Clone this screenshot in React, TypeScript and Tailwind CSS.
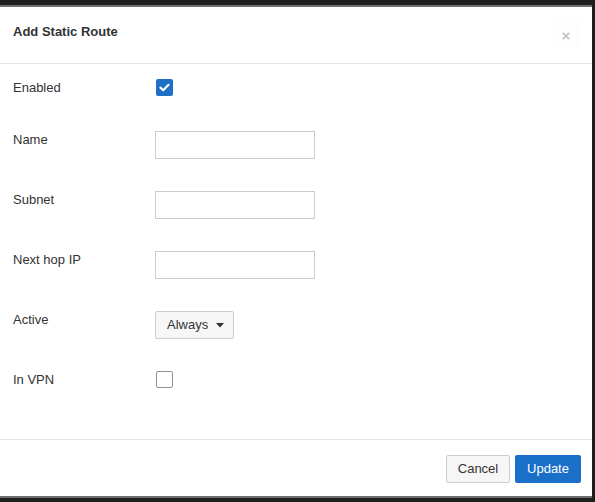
import React from "react";

function CheckBox({ checked }: { checked: boolean }) {
  if (checked) {
    return (
      <div className="mt-[1px] flex h-[17px] w-[17px] items-center justify-center rounded-[2px] bg-[#1f6fc6]">
        <svg width="11" height="9" viewBox="0 0 11 9" fill="none">
          <path d="M1.5 4.6 L4.2 7.2 L9.5 1.8" stroke="#fff" strokeWidth="2.2" strokeLinecap="round" strokeLinejoin="round" />
        </svg>
      </div>
    );
  }
  return <div className="mt-[1px] h-[17px] w-[17px] rounded-[2px] border border-[#8f8f8f] bg-white" />;
}

function TextInput() {
  return <div className="mt-[1px] h-[28px] w-[160px] border border-[#cccccc] bg-white" />;
}

function Row({ label, children, first }: { label: string; children: React.ReactNode; first?: boolean }) {
  return (
    <div className={`flex items-start ${first ? "h-[21px]" : "h-[29px]"}`}>
      <div className="w-[142px] pt-[1px] text-[13px] leading-[18px] text-[#333333]">{label}</div>
      {children}
    </div>
  );
}

export default function App() {
  return (
    <div
      className="h-[502px] w-[595px] overflow-hidden bg-[#1e1e1e] pt-[5px]"
      style={{ fontFamily: '"Liberation Sans", Arial, sans-serif' }}
    >
      <div className="flex h-[493px] w-[592px] flex-col border-y-2 border-[#6f6f6f] bg-white">
        {/* header */}
        <div className="flex h-[57px] items-start justify-between border-b border-[#e5e5e5] pl-[13px] pr-[11px]">
          <div className="pt-[15px] text-[13px] font-bold leading-[20px] text-[#333333]">Add Static Route</div>
          <div className="mt-[15px] flex h-[26px] w-[30px] items-center justify-center bg-[#fdfdfd] text-[15px] font-bold leading-none text-[#c4c4c4]">
            ×
          </div>
        </div>
        {/* body */}
        <div className="flex h-[375px] flex-col gap-[31px] px-[13px] pt-[14px]">
          <Row label="Enabled" first>
            <div className="pl-[1px]">
              <CheckBox checked />
            </div>
          </Row>
          <Row label="Name">
            <TextInput />
          </Row>
          <Row label="Subnet">
            <TextInput />
          </Row>
          <Row label="Next hop IP">
            <TextInput />
          </Row>
          <Row label="Active">
            <div className="mt-[1px] flex h-[28px] w-[79px] items-center rounded-[2px] border border-[#cccccc] bg-[#f7f7f7] pl-[11px] text-[13px] text-[#333333]">
              <span>Always</span>
              <svg className="ml-[8px]" width="8" height="5" viewBox="0 0 8 5">
                <path d="M0 0 L8 0 L4 4.5 Z" fill="#333333" />
              </svg>
            </div>
          </Row>
          <Row label="In VPN">
            <div className="pl-[1px]">
              <CheckBox checked={false} />
            </div>
          </Row>
        </div>
        {/* footer */}
        <div className="flex flex-1 items-start justify-end gap-[5px] border-t border-[#e5e5e5] pr-[11px] pt-[15px]">
          <div className="flex h-[28px] w-[64px] items-center justify-center rounded-[2px] border border-[#cccccc] bg-[#f6f6f6] text-[13px] text-[#333333]">
            Cancel
          </div>
          <div className="flex h-[28px] w-[66px] items-center justify-center rounded-[2px] bg-[#1a6fc9] text-[13px] text-white">
            Update
          </div>
        </div>
      </div>
    </div>
  );
}
